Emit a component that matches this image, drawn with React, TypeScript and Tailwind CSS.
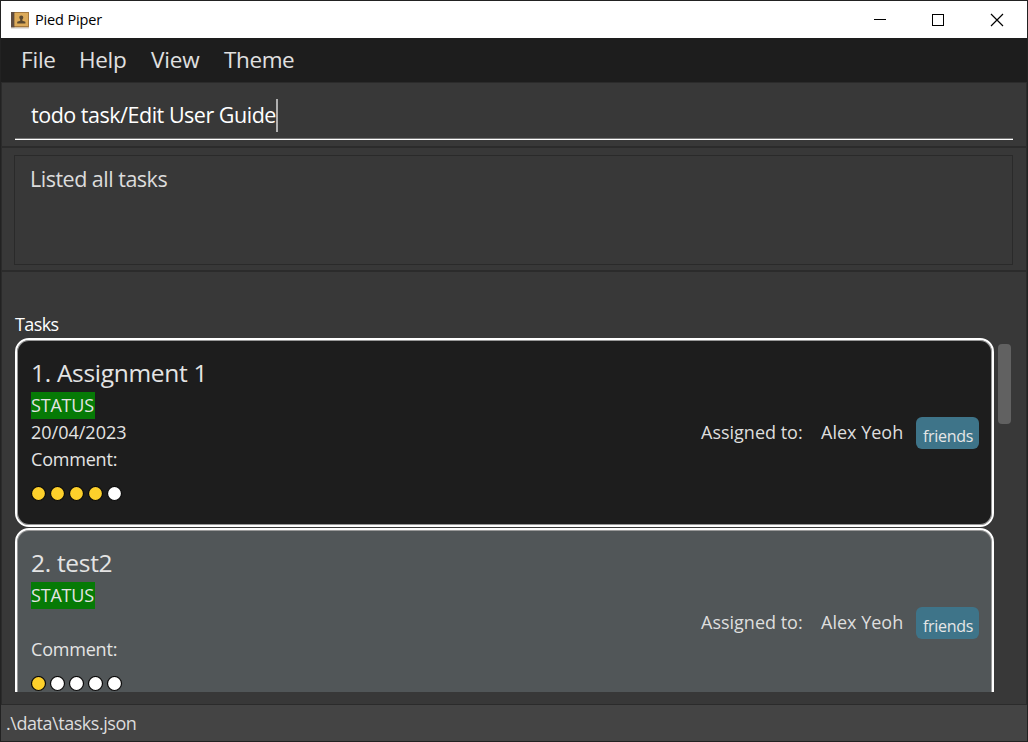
type Task = { title: string; date: string; score: number; dark: boolean };

const tasks: Task[] = [
  { title: "1. Assignment 1", date: "20/04/2023", score: 4, dark: true },
  { title: "2. test2", date: "", score: 1, dark: false },
];

function BookIcon() {
  return (
    <svg width="19" height="18" viewBox="0 0 19 18" className="ml-[9px] shrink-0">
      <rect x="1" y="1" width="18" height="15.5" fill="#a5783d" />
      <rect x="1" y="1" width="3.5" height="15.5" fill="#5f4c40" />
      <rect x="4.5" y="2" width="13.5" height="13" fill="#dcaa59" />
      <rect x="1" y="16.500" width="18" height="1" fill="#c9c4be" />
      <path d="M11.300 4.500c1.200 0 2 .8 2 1.900 0 .8-.4 1.400-.9 1.900v1.400l3 1v1.800H7.200v-1.800l3-1V8.300c-.5-.5-.9-1.100-.9-1.900 0-1.100.7-1.900 2-1.900z" fill="#5a482f" />
    </svg>
  );
}

function TaskCard({ task }: { task: Task }) {
  return (
    <div
      className={`flex h-[189px] shrink-0 justify-between rounded-[14px] border-2 border-white pl-[14px] pr-[13px] shadow-[inset_0_0_0_1px_#999] ${
        task.dark ? "bg-[#1d1d1d]" : "bg-[#515658]"
      }`}
    >
      <div className="flex flex-col items-start pt-[14px] text-[18px] leading-[27px] tracking-[-0.2px] text-[#e4e4e4]">
        <div className="h-[38px] text-[24.500px] leading-[37px] tracking-[-0.3px]">{task.title}</div>
        <div className="w-[64px] bg-[#067a06] whitespace-nowrap">STATUS</div>
        <div className="h-[27px] tracking-[0px]">{task.date}</div>
        <div>Comment:</div>
        <svg width="92" height="16" viewBox="0 0 92 16" className="mt-[13px]">
          {[0, 1, 2, 3, 4].map((i) => (
            <circle key={i} cx={7.5 + i * 19} cy="7.5" r="7" fill={i < task.score ? "#fdd02b" : "#fff"} stroke="#0a0a0a" strokeWidth="1.2" />
          ))}
        </svg>
      </div>
      <div className="mt-[77px] flex h-[32px] items-center text-[18px] leading-[27px] text-[#dedede] whitespace-nowrap">
        <span className="w-[120px] pb-[2px] tracking-[0px]">Assigned to:</span>
        <span className="w-[95px] pb-[2px] tracking-[0px]">Alex Yeoh</span>
        <span className="h-[32px] w-[63px] rounded-[6px] bg-[#3e7489] pl-[7px] pt-[4px] text-[16px] leading-[30px] tracking-[-0.3px] text-[#e6e6e6]">friends</span>
      </div>
    </div>
  );
}

export default function App() {
  return (
    <div className="flex h-[742px] w-[1028px] flex-col overflow-hidden border border-[#222] bg-[#383838] font-['Open_Sans','Noto_Sans',sans-serif]">
      <header className="flex h-[37px] shrink-0 items-center bg-white text-black">
        <BookIcon />
        <span className="ml-[6px] text-[14.500px] tracking-[-0.15px]">Pied Piper</span>
        <div className="ml-auto flex h-full items-center">
          <svg width="150" height="14" viewBox="0 0 150 14" fill="none" stroke="#000" className="mr-[4px] block" shapeRendering="crispEdges">
            <path d="M1 6.500h12M59.500 1.500h11v11h-11z" />
            <path d="M118 1l12 12M130 1l-12 12" shapeRendering="auto" strokeWidth="1.200" />
          </svg>
        </div>
      </header>
      <nav className="flex h-[44px] shrink-0 items-center bg-[#1d1d1d] pl-[20px] text-[22.500px] text-[#e0e0e0] whitespace-nowrap">
        <span className="w-[58px] tracking-[-0.2px]">File</span>
        <span className="w-[72px] tracking-[-0.3px]">Help</span>
        <span className="w-[73px] tracking-[-0.2px]">View</span>
        <span className="tracking-[-0.4px]">Theme</span>
      </nav>
      <main className="flex min-h-0 flex-1 flex-col border-x border-[#2b2b2b]">
        <section className="h-[66px] shrink-0 border-b-2 border-t border-[#2b2b2b] px-[13px]">
          <div className="flex h-[57px] items-center border-b border-white pl-[16px] pt-[8px] text-[21.500px] text-white shadow-[inset_0_-1px_0_#777]">
            <span className="tracking-[-0.480px] whitespace-nowrap">todo task/Edit User Guide</span>
            <span className="h-[33px] w-[2px] bg-[#b0b0b0]" />
          </div>
        </section>
        <section className="h-[124px] shrink-0 border-b-2 border-[#2b2b2b] pl-[12px] pr-[13px] pt-[7px]">
          <div className="h-[110px] border border-[#2a2a2a] pl-[15px] pt-[7px] text-[21.500px] leading-[32px] text-[#dcdcdc]">
            <span className="tracking-[-0.5px]">Listed all tasks</span>
          </div>
        </section>
        <section className="flex min-h-0 flex-1 flex-col px-[13px] pb-[12px] pt-[39px]">
          <h2 className="h-[27px] shrink-0 text-[18px] leading-[27px] tracking-[-0.6px] text-white">Tasks</h2>
          <div className="flex min-h-0 flex-1 gap-[4px] overflow-hidden">
            <div className="flex w-[979px] flex-col gap-px">
              {tasks.map((task) => (
                <TaskCard key={task.title} task={task} />
              ))}
            </div>
            <div className="mt-[6px] h-[80px] w-[13px] rounded-[4px] bg-[#616161]" />
          </div>
        </section>
      </main>
      <footer className="flex h-[37px] shrink-0 items-center border-t border-[#2b2b2b] bg-[#444] pl-[5px] text-[18px] text-[#dcdcdc]">
        <span className="tracking-[-0.450px]">.\data\tasks.json</span>
      </footer>
    </div>
  );
}
